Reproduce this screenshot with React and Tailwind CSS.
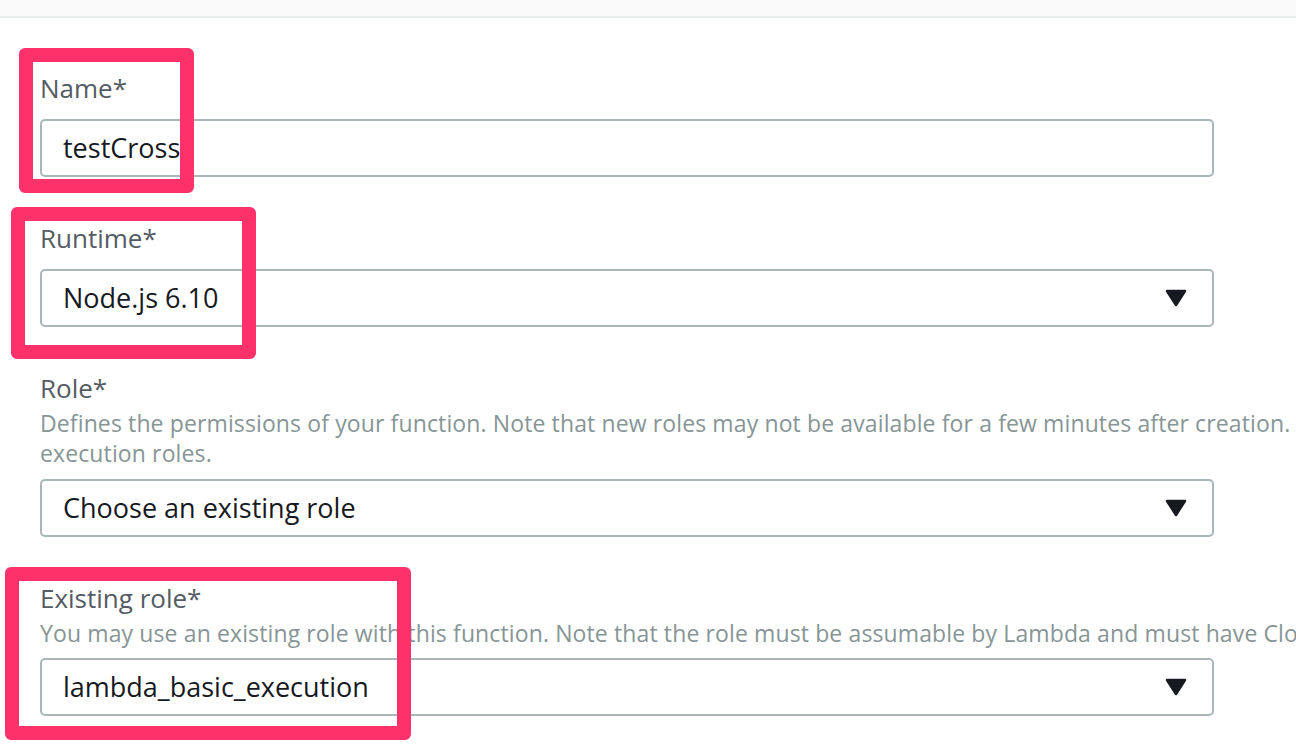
import React from "react";

const FONT = { fontFamily: '"Open Sans", "Liberation Sans", sans-serif' };

const Caret = () => (
  <svg width="22" height="18" viewBox="0 0 22 18" className="shrink-0">
    <polygon
      points="2,2 20,2 11,16"
      fill="#16191f"
      stroke="#16191f"
      strokeWidth="2.5"
      strokeLinejoin="round"
    />
  </svg>
);

const Label = ({ children }) => (
  <div className="text-[26px] leading-[34px] text-[#545b64]">{children}</div>
);

const Hint = ({ children }) => (
  <div className="text-[23px] leading-[30px] text-[#879596] whitespace-nowrap mt-[3px] tracking-[0.12px]">
    {children}
  </div>
);

const TextBox = ({ value, className = "" }) => (
  <div
    className={`w-[1174px] h-[58px] border-2 border-[#aab7b8] rounded-[5px] bg-white flex items-center pl-[21px] pr-[25px] ${className}`}
  >
    <span className="text-[27px] text-[#16191f]">{value}</span>
  </div>
);

const SelectBox = ({ value, className = "" }) => (
  <div
    className={`w-[1174px] h-[58px] border-2 border-[#aab7b8] rounded-[5px] bg-white flex items-center justify-between pl-[21px] pr-[25px] ${className}`}
  >
    <span className="text-[27px] text-[#16191f]">{value}</span>
    <Caret />
  </div>
);

const Highlight = ({ className }) => (
  <div
    className={`absolute border-[14px] border-[#ff316b] rounded-[6px] pointer-events-none ${className}`}
  />
);

export default function App() {
  return (
    <div className="relative w-[1296px] h-[750px] overflow-hidden bg-white" style={FONT}>
      <div className="h-[18px] bg-[#fafafa] border-b-2 border-[#eaeded]" />

      <div className="pl-[40px] pt-[53px]">
        <Label>Name*</Label>
        <TextBox value="testCross" className="mt-[14px]" />

        <div className="mt-[44px]">
          <Label>Runtime*</Label>
          <SelectBox value="Node.js 6.10" className="mt-[14px]" />
        </div>

        <div className="mt-[44px]">
          <Label>Role*</Label>
          <Hint>
            Defines the permissions of your function. Note that new roles may not be available for a few minutes after creation.
            <br />
            execution roles.
          </Hint>
          <SelectBox value="Choose an existing role" className="mt-[11px]" />
        </div>

        <div className="mt-[44px]">
          <Label>Existing role*</Label>
          <Hint>
            You may use an existing role with this function. Note that the role must be assumable by Lambda and must have Cloudwatch Logs permissions.
          </Hint>
          <SelectBox value="lambda_basic_execution" className="mt-[10px]" />
        </div>
      </div>

      <Highlight className="left-[19px] top-[48px] w-[175px] h-[145px]" />
      <Highlight className="left-[11px] top-[207px] w-[245px] h-[152px]" />
      <Highlight className="left-[5px] top-[567px] w-[406px] h-[173px]" />
    </div>
  );
}
